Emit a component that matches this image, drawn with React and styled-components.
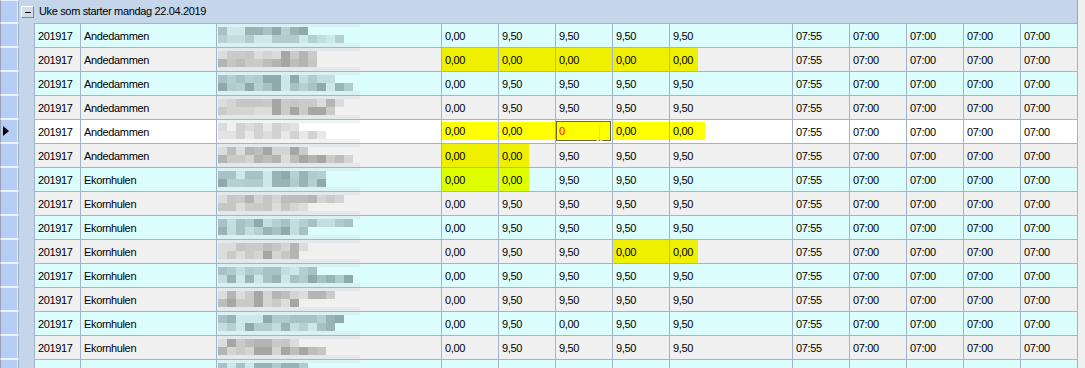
import React from 'react'
import styled, { createGlobalStyle } from 'styled-components'

const LINE = '#a0b4d0'

const TONES = {
  cyan: {
    bg: '#dcfdfd',
    yellow: '#ddff00',
    band: '#d8f1f4',
    blocks: ['#a6c2c2', '#b4d0d0', '#98b4b4', '#c2dede', '#8eaaaa', '#cce8e8', '#b0cccc'],
  },
  grey: {
    bg: '#f0f0f0',
    yellow: '#efef00',
    band: '#e3e8ea',
    blocks: ['#b4b4b4', '#c6c6c6', '#d4d4d4', '#a6a6a6', '#dcdcdc', '#bdbdbd', '#cacaca'],
  },
  sel: {
    bg: '#ffffff',
    yellow: '#ffff00',
    band: '#f1f3f3',
    blocks: ['#dcdcdc', '#e8e8e8', '#d2d2d2', '#f0f0f0', '#e2e2e2'],
  },
}

const GlobalStyle = createGlobalStyle`
  html, body {
    margin: 0;
    padding: 0;
    background: #f0f0f0;
    overflow: hidden;
  }
  body {
    font-family: "Liberation Sans", Arial, sans-serif;
    font-size: 11px;
    letter-spacing: -0.35px;
    color: #000;
  }
`

const Grid = styled.div`
  width: 1078px;
  display: flex;
  flex-direction: column;
`

const Row = styled.div`
  display: flex;
  flex: none;
  height: ${p => p.$h || 24}px;
`

const Selector = styled.div`
  box-sizing: border-box;
  width: 19px;
  flex: none;
  position: relative;
  background: #b6cdf4;
  border-left: 1px solid #96a2b4;
  border-right: 1px solid #9eafc8;
  border-top: 1px solid #edf3fe;
  border-bottom: 1px solid #edf3fe;
  box-shadow: inset -1px 0 0 #e4ecfa;
  display: flex;
  align-items: center;
  padding-left: 2px;
`

const Arrow = styled.span`
  width: 0;
  height: 0;
  border-top: 5px solid transparent;
  border-bottom: 5px solid transparent;
  border-left: 6px solid #000;
`

const Indent = styled.div`
  width: 15px;
  flex: none;
  background: #c5d5ea;
`

const GroupHeader = styled.div`
  flex: 1;
  box-sizing: border-box;
  background: #c5d5ea;
  border-right: 1px solid #9aa6b6;
  display: flex;
  align-items: center;
  padding-left: 2px;
  gap: 5px;
`

const ExpandBox = styled.div`
  box-sizing: border-box;
  width: 13px;
  height: 12px;
  margin-top: 1px;
  border: 1px solid;
  border-color: #ffffff #7c8798 #7c8798 #ffffff;
  background: #d2ddec;
  display: flex;
  align-items: center;
  justify-content: center;
`

const Minus = styled.span`
  width: 6px;
  height: 1px;
  background: #000;
`

const GroupTitle = styled.span`
  padding-bottom: 1px;
`

const RowCells = styled.div`
  display: flex;
  flex: none;
  outline: ${p => (p.$sel ? '1px dotted #000' : 'none')};
  outline-offset: -1px;
`

const Cell = styled.div`
  box-sizing: border-box;
  width: ${p => p.$w}px;
  flex: none;
  display: flex;
  overflow: hidden;
  position: relative;
  background: ${p => p.$bg};
  border-top: 1px solid ${LINE};
  border-left: 1px solid ${LINE};
  border-right: ${p => (p.$last ? `1px solid ${LINE}` : 'none')};
`

const Value = styled.span`
  box-sizing: border-box;
  display: flex;
  align-items: center;
  white-space: nowrap;
  padding-left: 3px;
  flex: ${p => (p.$hw ? 'none' : '1')};
  width: ${p => (p.$hw ? `${p.$hw}px` : 'auto')};
  background: ${p => p.$hl || 'transparent'};
  margin: ${p => (p.$hl && p.$inset ? '2px 0 3px' : '0')};
`

const EditBox = styled.span`
  flex: 1;
  display: flex;
  align-items: center;
  margin: 1px 1px 2px 0;
  padding-left: 2px;
  border: 1px solid #6a6a3a;
  background: #ffff00;
  color: #ff0000;
`

const IBeam = styled.svg`
  position: absolute;
  right: 9px;
  top: 5px;
`

const NameMosaic = styled.svg`
  display: block;
  flex: none;
`

function rng(seed) {
  let s = seed
  return () => {
    s = (s * 9301 + 49297) % 233280
    return s / 233280
  }
}

function Mosaic({ seed, tone }) {
  const r = rng(seed * 131 + 7)
  const t = TONES[tone]
  const rects = []
  rects.push(<rect key="top" x={1} y={0} width={142} height={3} fill={t.band} />)
  rects.push(<rect key="bot" x={1} y={19} width={142} height={4} fill={t.band} />)
  const bands = [
    { y: 3, h: 8 },
    { y: 11, h: 8 },
  ]
  bands.forEach((b, bi) => {
    const n = 9 + Math.floor(r() * 7)
    for (let i = 0; i < n; i++) {
      const c = t.blocks[Math.floor(r() * t.blocks.length)]
      rects.push(<rect key={bi + '-' + i} x={1 + i * 9} y={b.y} width={9} height={b.h} fill={c} />)
    }
  })
  return (
    <NameMosaic width="145" height="23" viewBox="0 0 145 23">
      {rects}
    </NameMosaic>
  )
}

const WIDTHS = [46, 136, 225, 57, 57, 57, 57, 123, 57, 57, 57, 57, 58]
const TIMES = ['07:55', '07:00', '07:00', '07:00', '07:00']
const STD = ['0,00', '9,50', '9,50', '9,50', '9,50']
const ZERO = ['0,00', '0,00', '0,00', '0,00', '0,00']

const rows = [
  { place: 'Andedammen', v: STD },
  { place: 'Andedammen', v: ZERO, hl: [0, 1, 2, 3], part: { 4: 28 } },
  { place: 'Andedammen', v: STD },
  { place: 'Andedammen', v: STD },
  { place: 'Andedammen', v: ['0,00', '0,00', '0', '0,00', '0,00'], hl: [0, 1, 3], part: { 4: 35 }, edit: 2, sel: true },
  { place: 'Andedammen', v: ['0,00', '0,00', '9,50', '9,50', '9,50'], hl: [0], part: { 1: 30 } },
  { place: 'Ekornhulen', v: ['0,00', '0,00', '9,50', '9,50', '9,50'], hl: [0], part: { 1: 30 } },
  { place: 'Ekornhulen', v: STD },
  { place: 'Ekornhulen', v: STD },
  { place: 'Ekornhulen', v: ['0,00', '9,50', '9,50', '0,00', '0,00'], hl: [3], part: { 4: 28 } },
  { place: 'Ekornhulen', v: STD },
  { place: 'Ekornhulen', v: STD },
  { place: 'Ekornhulen', v: ['0,00', '9,50', '0,00', '9,50', '9,50'] },
  { place: 'Ekornhulen', v: STD },
  { place: 'Ekornhulen', v: STD },
]

function DataRow({ row, index }) {
  const tone = row.sel ? 'sel' : index % 2 === 0 ? 'cyan' : 'grey'
  const t = TONES[tone]
  const hl = row.hl || []
  const part = row.part || {}

  return (
    <Row>
      <Selector>{row.sel && <Arrow />}</Selector>
      <Indent />
      <RowCells $sel={row.sel}>
        <Cell $w={WIDTHS[0]} $bg={t.bg}>
          <Value>201917</Value>
        </Cell>
        <Cell $w={WIDTHS[1]} $bg={t.bg}>
          <Value>{row.place}</Value>
        </Cell>
        <Cell $w={WIDTHS[2]} $bg={t.bg}>
          <Mosaic seed={index + 3} tone={tone} />
        </Cell>
        {row.v.map((val, i) => {
          const w = WIDTHS[3 + i]
          if (row.edit === i) {
            return (
              <Cell key={i} $w={w} $bg={t.bg}>
                <EditBox>{val}</EditBox>
                <IBeam width="7" height="16" viewBox="0 0 7 16">
                  <path d="M0.5 0.5h2.5 M4 0.5h2.5 M3.5 1v14 M0.5 15.5h2.5 M4 15.5h2.5" stroke="#d4d4a4" strokeWidth="1" fill="none" />
                </IBeam>
              </Cell>
            )
          }
          const full = hl.includes(i)
          const pw = part[i]
          return (
            <Cell key={i} $w={w} $bg={t.bg}>
              <Value $hl={full || pw ? t.yellow : null} $hw={pw} $inset={row.sel}>
                {val}
              </Value>
            </Cell>
          )
        })}
        {TIMES.map((tm, i) => (
          <Cell key={'t' + i} $w={WIDTHS[8 + i]} $bg={t.bg} $last={i === 4}>
            <Value>{tm}</Value>
          </Cell>
        ))}
      </RowCells>
    </Row>
  )
}

export default function App() {
  return (
    <>
      <GlobalStyle />
      <Grid>
        <Row $h={23}>
          <Selector />
          <GroupHeader>
            <ExpandBox>
              <Minus />
            </ExpandBox>
            <GroupTitle>Uke som starter mandag 22.04.2019</GroupTitle>
          </GroupHeader>
        </Row>
        {rows.map((row, i) => (
          <DataRow key={i} row={row} index={i} />
        ))}
      </Grid>
    </>
  )
}
